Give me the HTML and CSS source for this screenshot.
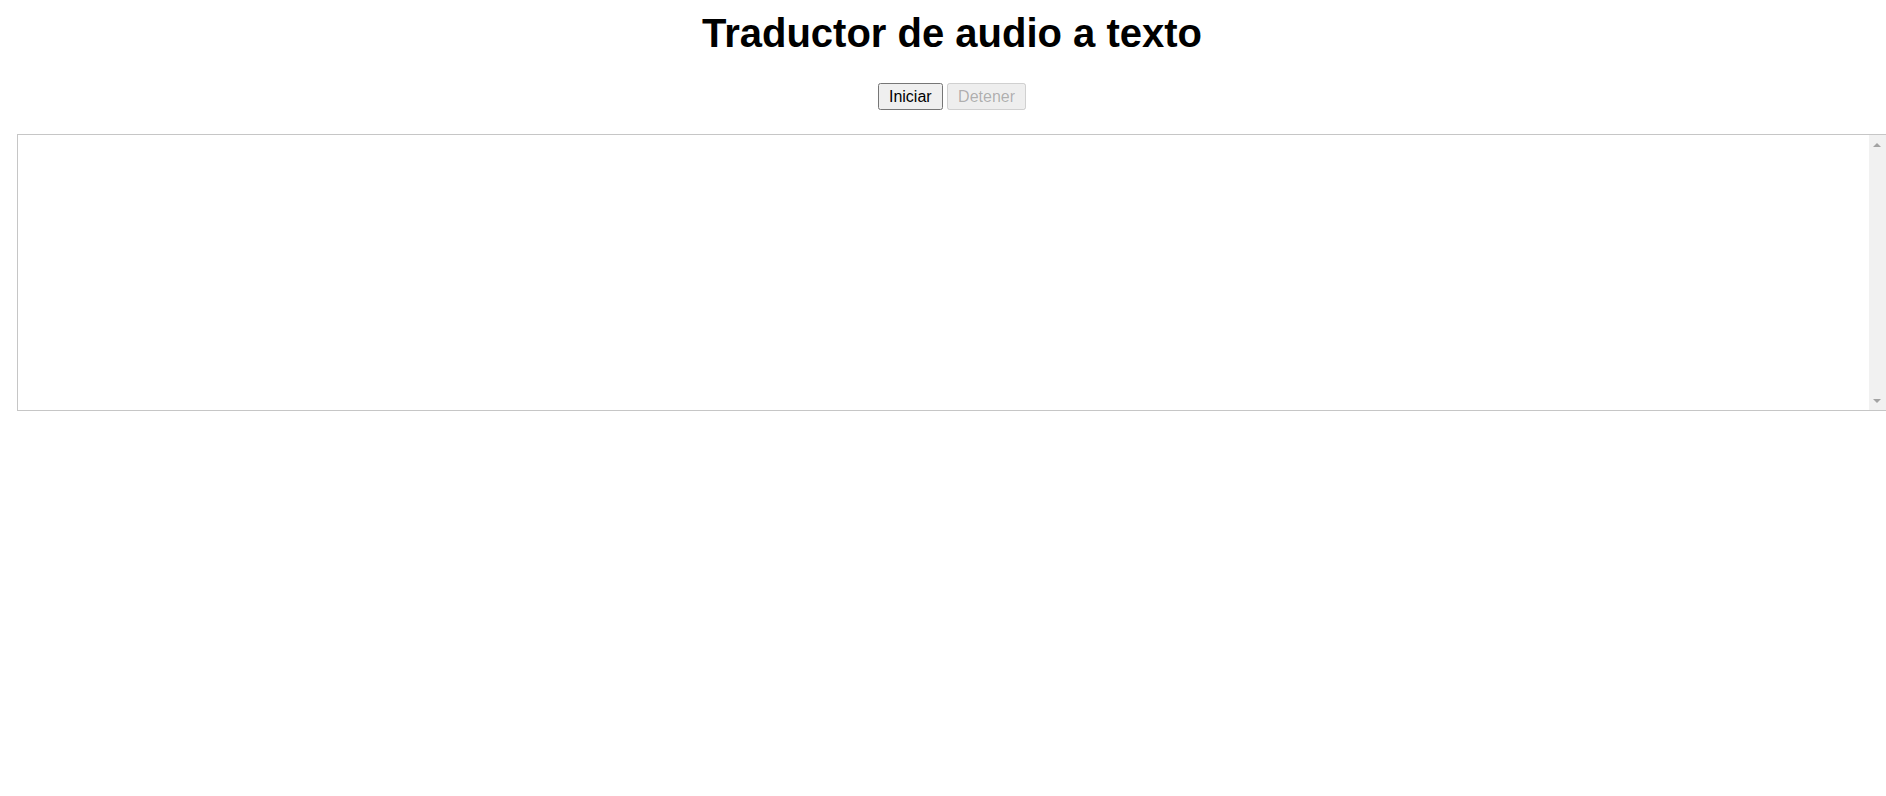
FILE: index.html
```html
<!DOCTYPE html>
<html lang="es">
<head>
<meta charset="utf-8">
<title>Traductor de audio a texto</title>
<link rel="stylesheet" href="styles.css">
</head>
<body>
<h1 class="title">Traductor de audio a texto</h1>
<div class="controls">
<button class="btn" type="button">Iniciar</button>
<button class="btn" type="button" disabled>Detener</button>
</div>
<div class="output-box">
<textarea class="output"></textarea>
<div class="scrollbar" aria-hidden="true">
<span class="arrow arrow-up"></span>
<span class="arrow arrow-down"></span>
</div>
</div>
</body>
</html>
```
FILE: styles.css
```css
html {
  overflow: hidden;
  background: #ffffff;
}
body {
  margin: 0;
  padding: 0 0 0 17px;
  width: 1870px;
  font-family: "Liberation Sans", Arial, sans-serif;
  color: #000000;
}
.title {
  margin: 10px 0 0;
  font-size: 40px;
  font-weight: bold;
  line-height: 46px;
  text-align: center;
}
.controls {
  margin-top: 27px;
  text-align: center;
  font-size: 16px;
  line-height: 25px;
  height: 25px;
}
.btn {
  font-family: "Liberation Sans", Arial, sans-serif;
  font-size: 16px;
  line-height: 19px;
  padding: 2px 9px;
  vertical-align: top;
}
.output-box {
  display: flex;
  box-sizing: border-box;
  margin-top: 26px;
  width: 1871px;
  height: 277px;
  border: 1px solid #c6c6c6;
}
.output {
  flex: 1;
  margin: 0;
  border: none;
  outline: none;
  resize: none;
  overflow: hidden;
  background: #ffffff;
  font-family: "Liberation Sans", Arial, sans-serif;
}
.scrollbar {
  display: flex;
  flex-direction: column;
  justify-content: space-between;
  width: 18px;
  background: #f1f1f1;
}
.arrow {
  display: block;
  width: 0;
  height: 0;
  margin-left: 4px;
  border-left: 4px solid transparent;
  border-right: 4px solid transparent;
}
.arrow-up {
  margin-top: 8px;
  border-bottom: 4px solid #a3a3a3;
}
.arrow-down {
  margin-bottom: 7px;
  border-top: 4px solid #a3a3a3;
}
```
